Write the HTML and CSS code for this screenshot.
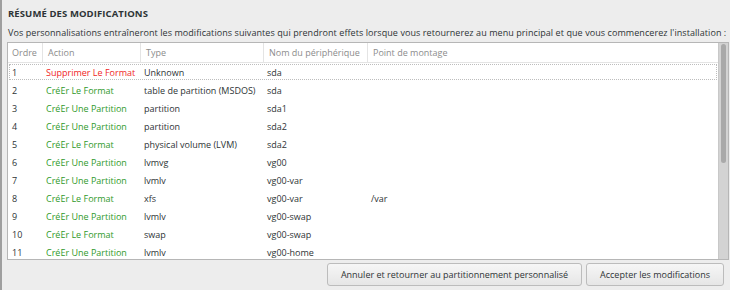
FILE: index.html
```html
<!DOCTYPE html>
<html lang="fr">
<head>
    <meta charset="UTF-8">
    <title>Résumé des modifications</title>
    <link rel="stylesheet" href="styles.css">
</head>
<body>
    <div class="dialog">
        <h2 class="title">RÉSUMÉ DES MODIFICATIONS</h2>
        <p class="intro">Vos personnalisations entraîneront les modifications suivantes qui prendront effets lorsque vous retournerez au menu principal et que vous commencerez l'installation :</p>

        <div class="list">
            <div class="table">
                <div class="row head">
                    <span>Ordre</span>
                    <span>Action</span>
                    <span>Type</span>
                    <span>Nom du périphérique</span>
                    <span>Point de montage</span>
                </div>
                <div class="rows">
                    <div class="row focus">
                        <span>1</span><span class="destroy">Supprimer Le Format</span><span>Unknown</span><span>sda</span><span></span>
                    </div>
                    <div class="row">
                        <span>2</span><span class="create">CréEr Le Format</span><span>table de partition (MSDOS)</span><span>sda</span><span></span>
                    </div>
                    <div class="row">
                        <span>3</span><span class="create">CréEr Une Partition</span><span>partition</span><span>sda1</span><span></span>
                    </div>
                    <div class="row">
                        <span>4</span><span class="create">CréEr Une Partition</span><span>partition</span><span>sda2</span><span></span>
                    </div>
                    <div class="row">
                        <span>5</span><span class="create">CréEr Le Format</span><span>physical volume (LVM)</span><span>sda2</span><span></span>
                    </div>
                    <div class="row">
                        <span>6</span><span class="create">CréEr Une Partition</span><span>lvmvg</span><span>vg00</span><span></span>
                    </div>
                    <div class="row">
                        <span>7</span><span class="create">CréEr Une Partition</span><span>lvmlv</span><span>vg00-var</span><span></span>
                    </div>
                    <div class="row">
                        <span>8</span><span class="create">CréEr Le Format</span><span>xfs</span><span>vg00-var</span><span>/var</span>
                    </div>
                    <div class="row">
                        <span>9</span><span class="create">CréEr Une Partition</span><span>lvmlv</span><span>vg00-swap</span><span></span>
                    </div>
                    <div class="row">
                        <span>10</span><span class="create">CréEr Le Format</span><span>swap</span><span>vg00-swap</span><span></span>
                    </div>
                    <div class="row">
                        <span>11</span><span class="create">CréEr Une Partition</span><span>lvmlv</span><span>vg00-home</span><span></span>
                    </div>
                </div>
            </div>
            <div class="scrollbar">
                <div class="thumb"></div>
            </div>
        </div>

        <div class="buttons">
            <button type="button">Annuler et retourner au partitionnement personnalisé</button>
            <button type="button">Accepter les modifications</button>
        </div>
    </div>
</body>
</html>
```

FILE: styles.css
```css
body {
    margin: 0;
    background-color: #ededed;
    color: #2e3436;
    font-family: 'Open Sans', 'DejaVu Sans', sans-serif;
    font-size: 9px;
}
.dialog {
    height: 290px;
    box-sizing: border-box;
    border-left: 2px solid #9f9f9f;
    padding: 0 1px 0 5px;
    display: flex;
    flex-direction: column;
}
.title {
    margin: 0;
    padding: 7px 0 0 1px;
    font-size: 9.5px;
    font-weight: bold;
    line-height: 14px;
    letter-spacing: 0.1px;
}
.intro {
    margin: 0;
    padding: 5px 0 0 1px;
    line-height: 14px;
    white-space: nowrap;
    letter-spacing: 0.07px;
}
.list {
    margin-top: 2px;
    height: 218px;
    box-sizing: border-box;
    border: 1px solid #b6b6b6;
    background-color: #fff;
    display: flex;
}
.table {
    flex: 1;
    overflow: hidden;
}
.row {
    display: grid;
    grid-template-columns: 34px 98px 123px 104px 1fr;
    height: 18px;
    align-items: center;
    white-space: nowrap;
}
.row span {
    padding-left: 4px;
    overflow: hidden;
}
.row.head {
    height: 19px;
    border-bottom: 1px solid #e4e4e4;
    color: #8c8c8c;
}
.row.head span {
    border-left: 1px solid #e4e4e4;
    padding-left: 5px;
    line-height: 19px;
}
.row.head span:first-child {
    border-left: none;
    padding-left: 4px;
}
.row.focus {
    outline: 1px dotted #bdbdbd;
    outline-offset: -2px;
}
.destroy {
    color: #f02626;
}
.create {
    color: #2f9a2a;
}
.scrollbar {
    width: 10px;
    background-color: #d3d3d3;
    border-left: 1px solid #c8c8c8;
    padding: 1px 2px;
    box-sizing: border-box;
}
.thumb {
    height: 119px;
    background-color: #a9a9a9;
    border-radius: 3px;
}
.buttons {
    display: flex;
    justify-content: flex-end;
    gap: 4px;
    margin-top: 3px;
    padding-right: 5px;
}
button {
    height: 23px;
    padding: 0 13px;
    font-family: inherit;
    font-size: 9px;
    color: #2e3436;
    background: linear-gradient(#f6f6f6, #e6e6e6);
    border: 1px solid #bcbcbc;
    border-radius: 3px;
}
```
